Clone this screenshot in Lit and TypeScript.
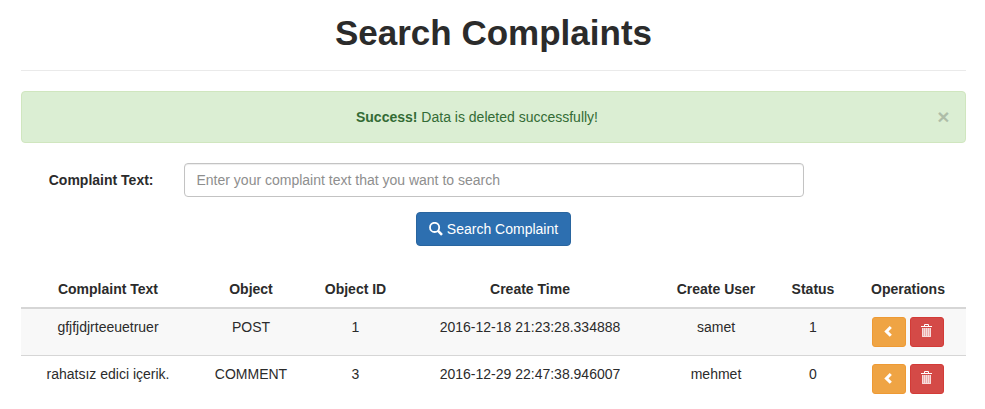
import { LitElement, html, css, svg } from "lit";
import { customElement, state } from "lit/decorators.js";

interface Complaint {
  text: string;
  object: string;
  objectId: number;
  created: string;
  user: string;
  status: number;
}

const searchIcon = html`<svg class="icon-search" viewBox="0 0 14 14" aria-hidden="true">
  ${svg`<circle cx="5.6" cy="5.4" r="4.6" fill="none" stroke="currentColor" stroke-width="1.8"/>
  <path d="M8.8 8.6 L13 12.8" fill="none" stroke="currentColor" stroke-width="2.6"/>`}
</svg>`;

const backIcon = html`<svg class="icon-small" viewBox="0 0 12 16" aria-hidden="true">
  ${svg`<path d="M7.8 3 L3.4 7.4 L7.8 11.8" fill="none" stroke="currentColor" stroke-width="3"/>`}
</svg>`;

const trashIcon = html`<svg class="icon-small" viewBox="0 0 12 16" aria-hidden="true">
  ${svg`<path d="M3.5 2 V0.5 H7.5 V2" fill="none" stroke="currentColor" stroke-width="1"/>
  <path d="M0 2 H11 V3 H0 Z" fill="currentColor"/>
  <path d="M1 4 H10 V13 H1 Z" fill="currentColor" fill-opacity="0.55"/>
  <path d="M1.5 4 V12.5 H9.5 V4 M3.5 4 V12 M5.5 4 V12 M7.5 4 V12" fill="none" stroke="currentColor" stroke-width="0.6"/>`}
</svg>`;

@customElement("app-root")
export class AppRoot extends LitElement {
  @state() private alertOpen = true;

  @state() private rows: Complaint[] = [
    { text: "gfjfjdjrteeuetruer", object: "POST", objectId: 1, created: "2016-12-18 21:23:28.334888", user: "samet", status: 1 },
    { text: "rahatsız edici içerik.", object: "COMMENT", objectId: 3, created: "2016-12-29 22:47:38.946007", user: "mehmet", status: 0 },
  ];

  static styles = css`
    :host {
      display: block;
      padding: 13px 19px 13px 21px;
      background: #fff;
      color: #2b2b2b;
      font: 14px/20px "Liberation Sans", Arial, sans-serif;
    }
    * { box-sizing: border-box; }
    h1 {
      margin: 0;
      font-size: 35px;
      line-height: 40px;
      font-weight: 700;
      text-align: center;
    }
    hr {
      margin: 17px 0 20px;
      border: 0;
      border-top: 1px solid #eaeaea;
    }
    .alert {
      display: flex;
      align-items: center;
      gap: 20px;
      padding: 15px;
      margin-bottom: 20px;
      border: 1px solid #d0e6bf;
      border-radius: 4px;
      background: #dbeed3;
      color: #336b35;
    }
    .message { flex: 1; text-align: center; }
    .close {
      width: 13px;
      height: 20px;
      padding: 0;
      border: 0;
      background: none;
      color: #000;
      opacity: 0.2;
      font: 700 21px/20px "Liberation Sans", Arial, sans-serif;
      cursor: pointer;
    }
    .field {
      display: grid;
      grid-template-columns: 2fr 8fr 2fr;
      margin: 0 -15px 15px;
    }
    label {
      padding: 7px 15px;
      font-weight: 700;
      text-align: right;
    }
    .control { padding: 0 15px; }
    input {
      display: block;
      width: 100%;
      height: 34px;
      padding: 6px 12px;
      border: 1px solid #c3c3c3;
      border-radius: 4px;
      background: #fff;
      box-shadow: inset 0 1px 1px rgba(0, 0, 0, 0.075);
      color: #555;
      font: inherit;
    }
    input::placeholder { color: #8e8e8e; opacity: 1; }
    .actions { display: flex; justify-content: center; margin-bottom: 25px; }
    .btn {
      display: inline-flex;
      align-items: center;
      justify-content: center;
      border: 1px solid;
      border-radius: 4px;
      color: #fff;
      font: inherit;
      cursor: pointer;
    }
    .primary {
      gap: 4px;
      padding: 6px 12px;
      background: #2d6fb0;
      border-color: #29659f;
    }
    .small { width: 34px; height: 30px; padding: 0; border-radius: 3px; }
    .warning { background: #efa444; border-color: #ee9a34; }
    .danger { background: #d44a47; border-color: #d33b37; }
    .icon-search { width: 14px; height: 14px; }
    .icon-small { width: 12px; height: 16px; }
    table {
      width: 100%;
      table-layout: fixed;
      border-collapse: separate;
      border-spacing: 0;
    }
    .c-text { width: 174px; }
    .c-object { width: 112px; }
    .c-id { width: 97px; }
    .c-time { width: 252px; }
    .c-user { width: 120px; }
    .c-status { width: 74px; }
    .c-ops { width: 116px; }
    th, td { padding: 8px; text-align: center; vertical-align: top; }
    th { border-bottom: 2px solid #d6d6d6; }
    tbody tr:nth-child(odd) { background: #f8f8f8; }
    tbody tr + tr td { border-top: 1px solid #d6d6d6; }
    .ops { display: flex; justify-content: center; gap: 4px; }
  `;

  private remove(row: Complaint) {
    this.rows = this.rows.filter((r) => r !== row);
    this.alertOpen = true;
  }

  render() {
    return html`
      <h1>Search Complaints</h1>
      <hr />
      ${this.alertOpen
        ? html`<div class="alert" role="alert">
            <span class="message"><strong>Success!</strong> Data is deleted successfully!</span>
            <button class="close" type="button" aria-label="Close" @click=${() => (this.alertOpen = false)}>×</button>
          </div>`
        : null}
      <form @submit=${(e: Event) => e.preventDefault()}>
        <div class="field">
          <label for="complaint">Complaint Text:</label>
          <div class="control">
            <input id="complaint" type="text" placeholder="Enter your complaint text that you want to search" />
          </div>
        </div>
        <div class="actions">
          <button class="btn primary" type="submit">${searchIcon}<span>Search Complaint</span></button>
        </div>
      </form>
      <table>
        <colgroup>
          <col class="c-text" /><col class="c-object" /><col class="c-id" /><col class="c-time" />
          <col class="c-user" /><col class="c-status" /><col class="c-ops" />
        </colgroup>
        <thead>
          <tr>
            <th>Complaint Text</th><th>Object</th><th>Object ID</th><th>Create Time</th>
            <th>Create User</th><th>Status</th><th>Operations</th>
          </tr>
        </thead>
        <tbody>
          ${this.rows.map(
            (row) => html`<tr>
              <td>${row.text}</td><td>${row.object}</td><td>${row.objectId}</td><td>${row.created}</td>
              <td>${row.user}</td><td>${row.status}</td>
              <td>
                <div class="ops">
                  <button class="btn small warning" type="button" aria-label="Back">${backIcon}</button>
                  <button class="btn small danger" type="button" aria-label="Delete" @click=${() => this.remove(row)}>${trashIcon}</button>
                </div>
              </td>
            </tr>`
          )}
        </tbody>
      </table>
    `;
  }
}
